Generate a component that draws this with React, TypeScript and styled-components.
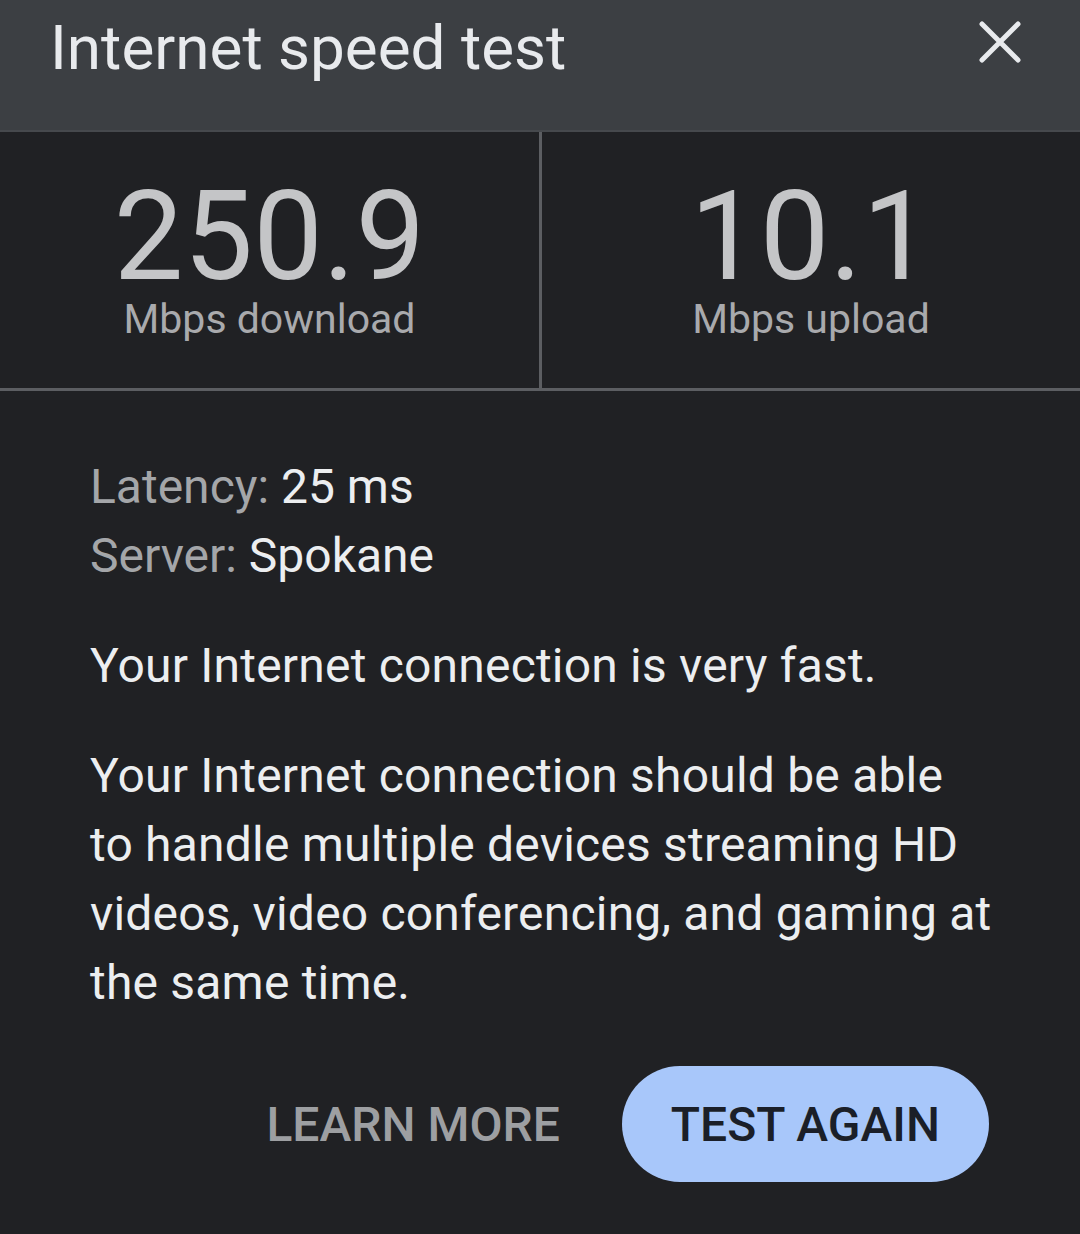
import styled, { createGlobalStyle } from 'styled-components';

const GlobalStyle = createGlobalStyle`
  html, body {
    margin: 0;
    padding: 0;
    background: #202124;
  }
  body {
    font-family: Roboto, "Noto Sans", Arial, sans-serif;
    -webkit-font-smoothing: antialiased;
  }
`;

const Screen = styled.div`
  width: 1080px;
  height: 1234px;
  background: #202124;
  display: flex;
  flex-direction: column;
  overflow: hidden;

  & > * {
    flex-shrink: 0;
  }
`;

const Header = styled.header`
  height: 132px;
  background: #3c3f43;
  border-bottom: 2px solid #46494d;
  display: flex;
  align-items: flex-start;
  justify-content: space-between;
  padding: 0 50px;
  box-sizing: border-box;
`;

const Title = styled.h1`
  margin: 0;
  padding-top: 8px;
  font-size: 62px;
  font-weight: 400;
  line-height: 80px;
  color: #e8eaed;
`;

const CloseButton = styled.button`
  margin-top: 21px;
  margin-right: 9px;
  width: 42px;
  height: 42px;
  padding: 0;
  border: none;
  background: none;
  color: #e8eaed;
  display: flex;
`;

const Stats = styled.section`
  display: grid;
  grid-template-columns: 539px 3px 1fr;
  height: 256px;
  border-bottom: 3px solid #5c5e62;
`;

const StatDivider = styled.div`
  background: #5c5e62;
`;

const Stat = styled.div`
  display: flex;
  flex-direction: column;
  align-items: center;
  padding-top: 43px;
`;

const StatValue = styled.div`
  font-size: 124px;
  line-height: 124px;
  font-weight: 400;
  color: #c4c5c7;
`;

const StatLabel = styled.div`
  margin-top: -4px;
  font-size: 41px;
  line-height: 48px;
  color: #a9aaad;
`;

const Body = styled.main`
  padding: 61px 90px 0;
  display: flex;
  flex-direction: column;
`;

const InfoLine = styled.div`
  font-size: 48px;
  line-height: 69px;
  color: #eceef0;
`;

const InfoKey = styled.span`
  color: #a4a6a9;
`;

const Paragraph = styled.p<{ $gap?: number }>`
  margin: ${(p) => p.$gap ?? 0}px 0 0;
  font-size: 48px;
  line-height: 69px;
  letter-spacing: 0.2px;
  white-space: nowrap;
  color: #eceef0;
`;

const Actions = styled.div`
  display: flex;
  justify-content: flex-end;
  align-items: center;
  gap: 62px;
  margin-top: 49px;
  padding-right: 1px;
`;

const TextButton = styled.button`
  border: none;
  background: none;
  padding: 0;
  font-family: inherit;
  font-size: 48px;
  font-weight: 500;
  color: #9d9fa2;
`;

const PillButton = styled.button`
  height: 116px;
  padding: 0 49px;
  border: none;
  border-radius: 58px;
  background: #a8c7fa;
  font-family: inherit;
  font-size: 48px;
  font-weight: 500;
  color: #1b1f28;
`;

export default function App() {
  return (
    <Screen>
      <GlobalStyle />
      <Header>
        <Title>Internet speed test</Title>
        <CloseButton aria-label="Close">
          <svg width="42" height="42" viewBox="0 0 42 42">
            <path d="M3 3 L39 39 M39 3 L3 39" stroke="currentColor" strokeWidth="5" strokeLinecap="round" />
          </svg>
        </CloseButton>
      </Header>

      <Stats>
        <Stat>
          <StatValue>250.9</StatValue>
          <StatLabel>Mbps download</StatLabel>
        </Stat>
        <StatDivider />
        <Stat>
          <StatValue>10.1</StatValue>
          <StatLabel>Mbps upload</StatLabel>
        </Stat>
      </Stats>

      <Body>
        <InfoLine>
          <InfoKey>Latency:</InfoKey> 25 ms
        </InfoLine>
        <InfoLine>
          <InfoKey>Server:</InfoKey> Spokane
        </InfoLine>
        <Paragraph $gap={41}>Your Internet connection is very fast.</Paragraph>
        <Paragraph $gap={41}>
          Your Internet connection should be able
          <br />
          to handle multiple devices streaming HD
          <br />
          videos, video conferencing, and gaming at
          <br />
          the same time.
        </Paragraph>
        <Actions>
          <TextButton>LEARN MORE</TextButton>
          <PillButton>TEST AGAIN</PillButton>
        </Actions>
      </Body>
    </Screen>
  );
}
